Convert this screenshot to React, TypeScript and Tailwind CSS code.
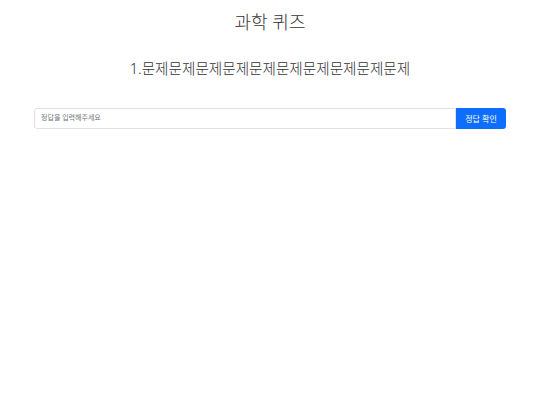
export default function App() {
  return (
    <div
      className="min-h-screen bg-white text-[#333]"
      style={{ fontFamily: '"Noto Sans", "Noto Sans CJK KR", sans-serif' }}
    >
      <div className="px-[34px]">
        <h1 className="pt-[9px] text-center text-[18px] leading-[26px] font-light">과학 퀴즈</h1>
        <h2 className="mt-[21px] text-center text-[14.6px] leading-[24px] font-light">
          1.문제문제문제문제문제문제문제문제문제문제
        </h2>
        <div className="mt-[28px] flex h-[21px]">
          <input
            type="text"
            placeholder="정답을 입력해주세요"
            className="min-w-0 flex-1 rounded-l-[3px] border border-[#dee2e6] px-[6px] text-[7px] placeholder:text-[#6c757d] focus:outline-none"
          />
          <button
            type="button"
            className="w-[50px] rounded-r-[3px] bg-[#0d6efd] text-[8px] text-white"
          >
            정답 확인
          </button>
        </div>
      </div>
    </div>
  );
}
